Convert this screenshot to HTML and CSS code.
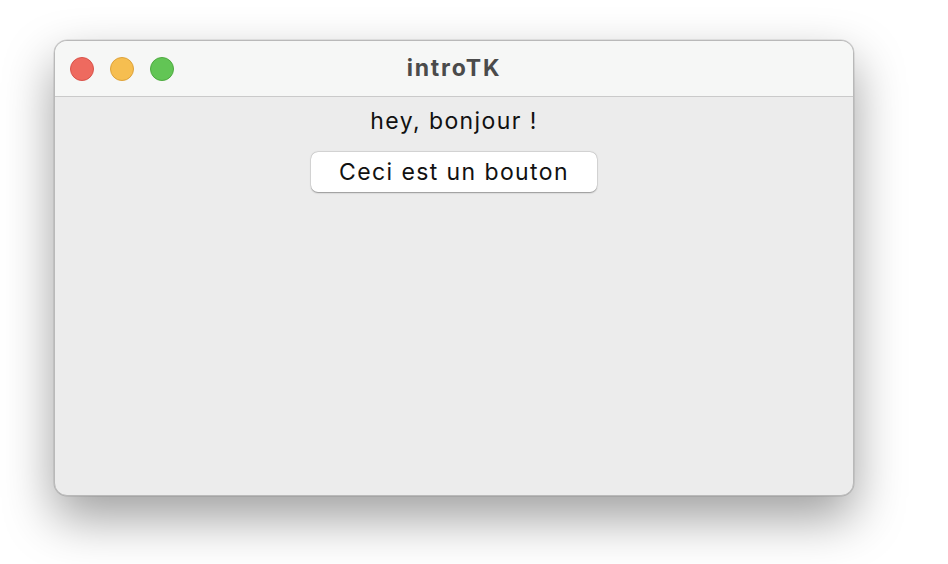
FILE: index.html
```html
<!DOCTYPE html>
<html>
<head>
<meta charset="utf-8">
<link rel="stylesheet" href="styles.css">
</head>
<body>
<div class="desktop">
  <div class="window">
    <div class="titlebar">
      <div class="lights">
        <span class="light red"></span>
        <span class="light yellow"></span>
        <span class="light green"></span>
      </div>
      <div class="title">introTK</div>
    </div>
    <div class="content">
      <div class="label">hey, bonjour !</div>
      <button class="btn">Ceci est un bouton</button>
    </div>
  </div>
</div>
</body>
</html>
```
FILE: styles.css
```css
html, body {
  margin: 0;
  padding: 0;
  background: #ffffff;
  width: 948px;
  height: 564px;
  overflow: hidden;
}
.desktop {
  padding: 40px 0 0 54px;
}
.window {
  width: 800px;
  height: 456px;
  box-sizing: border-box;
  border-radius: 13px;
  background: #ececec;
  border: 1px solid #b9b9b9;
  overflow: hidden;
  display: flex;
  flex-direction: column;
  box-shadow: 0 22px 50px rgba(0,0,0,0.38), 0 0 0 0.5px rgba(0,0,0,0.15);
  font-family: "Inter", "Liberation Sans", sans-serif;
}
.titlebar {
  height: 56px;
  flex: none;
  background: #f6f7f6;
  border-bottom: 1px solid #cacaca;
  box-sizing: border-box;
  position: relative;
  display: flex;
  align-items: center;
}
.lights {
  display: flex;
  gap: 16px;
  padding-left: 15px;
}
.light {
  width: 22px;
  height: 22px;
  border-radius: 50%;
  display: block;
}
.red { background: #ee6a5f; border: 1px solid #d9534a; }
.yellow { background: #f6be50; border: 1px solid #dea23a; }
.green { background: #62c555; border: 1px solid #4eaa40; }
.title {
  position: absolute;
  left: 0;
  right: 0;
  top: 0;
  bottom: 0;
  display: flex;
  align-items: center;
  justify-content: center;
  font-weight: 700;
  font-size: 23px;
  letter-spacing: 1.8px;
  color: #4b4b4b;
  padding-bottom: 2px;
}
.content {
  display: flex;
  flex-direction: column;
  align-items: center;
}
.label {
  font-size: 23px;
  letter-spacing: 1.4px;
  color: #111;
  margin-top: 10px;
  line-height: 28px;
}
.btn {
  margin-top: 17px;
  width: 286px;
  height: 40px;
  border: none;
  border-radius: 7px;
  background: #ffffff;
  box-shadow: 0 0.5px 1.5px rgba(0,0,0,0.35), 0 0 0 0.5px rgba(0,0,0,0.08);
  font-family: "Inter", "Liberation Sans", sans-serif;
  font-size: 23px;
  letter-spacing: 1.4px;
  color: #111;
  padding: 0;
}
```
